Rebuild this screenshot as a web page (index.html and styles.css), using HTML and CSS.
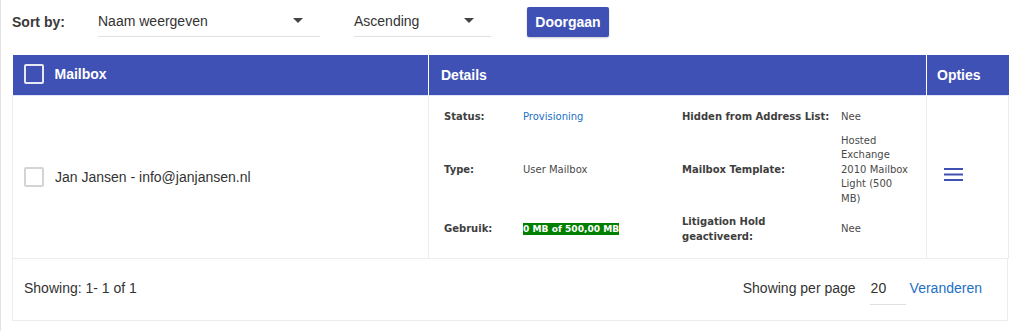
FILE: index.html
```html
<!DOCTYPE html>
<html lang="nl">
<head>
    <meta charset="UTF-8">
    <title>Mailboxen</title>
    <link rel="stylesheet" href="styles.css">
</head>
<body>
    <div class="page">
        <div class="toolbar">
            <span class="sort-label">Sort by:</span>
            <div class="select select-field">
                <span>Naam weergeven</span>
                <span class="caret"></span>
            </div>
            <div class="select select-order">
                <span>Ascending</span>
                <span class="caret"></span>
            </div>
            <button class="btn-primary">Doorgaan</button>
        </div>

        <table class="mailbox-table">
            <colgroup>
                <col class="col-mailbox">
                <col class="col-details">
                <col class="col-options">
            </colgroup>
            <thead>
                <tr>
                    <th class="head-cell th-mailbox"><span class="checkbox checkbox-head"></span>Mailbox</th>
                    <th class="head-cell th-details">Details</th>
                    <th class="head-cell th-options">Opties</th>
                </tr>
            </thead>
            <tbody>
                <tr>
                    <td class="row-cell td-mailbox">
                        <div class="mailbox-name"><span class="checkbox"></span>Jan Jansen - info@janjansen.nl</div>
                    </td>
                    <td class="row-cell td-details">
                        <table class="details">
                            <tr>
                                <th class="d-label1">Status:</th>
                                <td class="d-value1"><a href="#" class="link">Provisioning</a></td>
                                <th class="d-label2">Hidden from Address List:</th>
                                <td class="d-value2">Nee</td>
                            </tr>
                            <tr>
                                <th>Type:</th>
                                <td>User Mailbox</td>
                                <th class="d-label2">Mailbox Template:</th>
                                <td>Hosted Exchange 2010 Mailbox Light (500 MB)</td>
                            </tr>
                            <tr>
                                <th>Gebruik:</th>
                                <td><span class="usage">0 MB of 500,00 MB</span></td>
                                <th class="d-label2">Litigation Hold geactiveerd:</th>
                                <td>Nee</td>
                            </tr>
                        </table>
                    </td>
                    <td class="row-cell td-options">
                        <svg class="menu-icon" width="19" height="13" viewBox="0 0 19 13">
                            <rect x="0" y="0" width="19" height="2" fill="#3f51b5"/>
                            <rect x="0" y="5.5" width="19" height="2" fill="#3f51b5"/>
                            <rect x="0" y="11" width="19" height="2" fill="#3f51b5"/>
                        </svg>
                    </td>
                </tr>
            </tbody>
        </table>

        <div class="table-footer">
            <span>Showing: 1- 1 of 1</span>
            <div class="per-page">
                <span>Showing per page</span>
                <span class="per-page-input">20</span>
                <a href="#" class="link">Veranderen</a>
            </div>
        </div>
    </div>
</body>
</html>
```

FILE: styles.css
```css
body {
    margin: 0;
    font-family: 'Liberation Sans', Arial, sans-serif;
    color: #333;
    background: #fff;
}

.page {
    border-left: 1px solid #e3e3e3;
    padding: 0 7px 11px 11px;
    min-height: 320px;
}

.toolbar {
    display: flex;
    align-items: center;
    height: 30px;
    padding-top: 7px;
    margin-bottom: 18px;
    font-size: 14px;
}

.sort-label {
    font-weight: bold;
    width: 86px;
    color: #3a3a3a;
}

.select {
    display: flex;
    align-items: center;
    justify-content: space-between;
    height: 30px;
    box-sizing: border-box;
    border-bottom: 1px solid #e0e0e0;
    padding: 0 17px 2px 0;
}

.select-field {
    width: 222px;
    margin-right: 34px;
}

.select-order {
    width: 137px;
    margin-right: 36px;
}

.caret {
    width: 0;
    height: 0;
    border-left: 5px solid transparent;
    border-right: 5px solid transparent;
    border-top: 5px solid #444;
}

.btn-primary {
    width: 82px;
    height: 30px;
    border: none;
    border-radius: 2px;
    background: #3f51b5;
    color: #fff;
    font-family: inherit;
    font-size: 14px;
    font-weight: bold;
    padding: 0;
    box-shadow: 0 1px 2px rgba(0, 0, 0, 0.2);
}

.mailbox-table {
    width: 996px;
    border-collapse: collapse;
    table-layout: fixed;
}

.col-mailbox { width: 416px; }
.col-details { width: 498px; }
.col-options { width: 82px; }

.head-cell {
    background: #3f51b5;
    color: #fff;
    height: 40px;
    font-size: 14px;
    font-weight: bold;
    text-align: left;
    padding: 0;
    border-left: 1px solid #fff;
}

.th-mailbox {
    border-left: none;
    padding-left: 11px;
}

.th-details {
    padding-left: 12px;
}

.th-options {
    padding-left: 10px;
}

.checkbox {
    display: inline-block;
    vertical-align: middle;
    width: 16px;
    height: 16px;
    border: 2px solid #d4d4d4;
    border-radius: 2px;
    margin-right: 11px;
    background: #fff;
}

.checkbox-head {
    border-color: #e6e8f5;
    background: transparent;
    margin-top: -3px;
}

.row-cell {
    height: 163px;
    box-sizing: border-box;
    border: 1px solid #ececec;
    border-top: 1px solid #dfe5f6;
    padding: 0;
    vertical-align: middle;
}

.td-mailbox {
    padding-left: 11px;
    font-size: 14px;
}

.mailbox-name {
    display: flex;
    align-items: center;
}

.td-details {
    padding-left: 15px;
}

.td-options {
    padding-left: 17px;
}

.menu-icon {
    display: block;
    margin-top: -5px;
}

.details {
    width: 469px;
    table-layout: fixed;
    border-collapse: collapse;
    font-family: 'DejaVu Sans', Verdana, sans-serif;
    font-size: 10px;
    line-height: 14.5px;
    color: #4a4a4a;
}

.details th,
.details td {
    padding: 4.5px 0;
    text-align: left;
    vertical-align: middle;
    box-sizing: border-box;
}

.details th {
    font-weight: bold;
    color: #3e3e3e;
}

.details .d-label1 { width: 79px; }
.details .d-value1 { width: 159px; }
.details .d-label2 { width: 159px; padding-right: 11px; }
.details .d-value2 { width: 72px; }

.link {
    color: #1c6fc4;
    text-decoration: none;
}

.usage {
    background: #008000;
    color: #fff;
    font-weight: bold;
    font-size: 9.1px;
    padding: 1px 0;
}

.table-footer {
    display: flex;
    align-items: flex-start;
    justify-content: space-between;
    height: 62px;
    box-sizing: border-box;
    width: 996px;
    border: 1px solid #ececec;
    border-top: none;
    padding: 21px 25px 0 11px;
    font-size: 14px;
    line-height: 16px;
}

.per-page {
    display: flex;
    align-items: flex-start;
}

.per-page-input {
    display: inline-block;
    width: 36px;
    box-sizing: border-box;
    padding: 0 0 8px 1px;
    margin: 0 4px 0 14px;
    border-bottom: 1px solid #e0e0e0;
}
```
